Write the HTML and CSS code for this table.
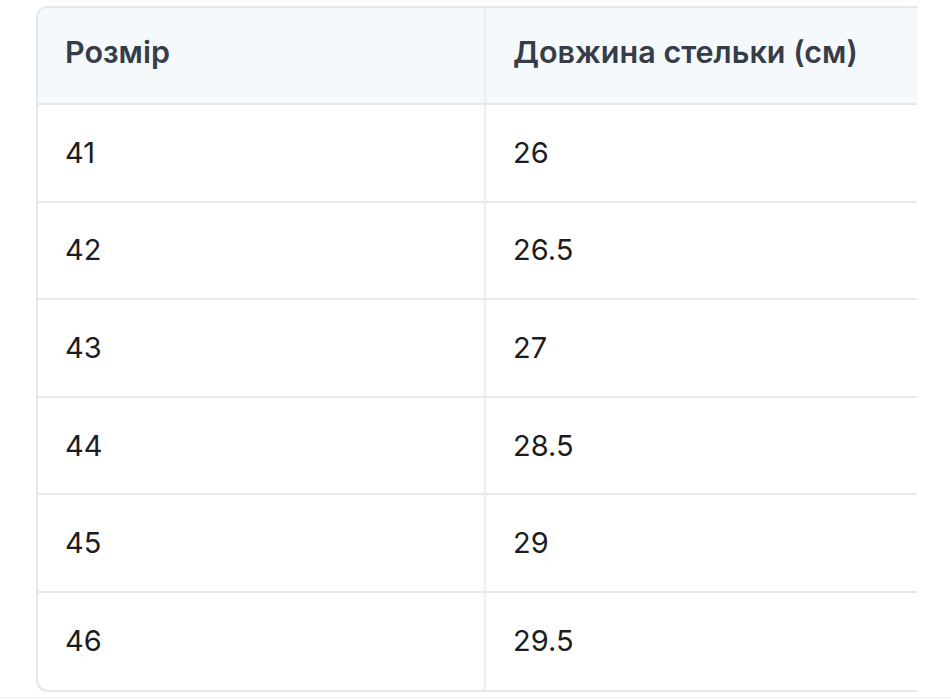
FILE: index.html
```html
<!DOCTYPE html>
<html lang="uk">
<head>
<meta charset="utf-8">
<title>Розмірна сітка</title>
<link rel="stylesheet" href="styles.css">
</head>
<body>
<div class="page">
  <div class="table-wrap">
    <table class="size-table">
      <thead>
        <tr><th class="col-size">Розмір</th><th>Довжина стельки (см)</th></tr>
      </thead>
      <tbody>
        <tr><td>41</td><td>26</td></tr>
        <tr><td>42</td><td>26.5</td></tr>
        <tr><td>43</td><td>27</td></tr>
        <tr><td>44</td><td>28.5</td></tr>
        <tr><td>45</td><td>29</td></tr>
        <tr><td>46</td><td>29.5</td></tr>
      </tbody>
    </table>
  </div>
</div>
</body>
</html>
```

FILE: styles.css
```css
html, body {
  margin: 0;
  padding: 0;
  background: #ffffff;
}
body {
  font-family: Inter, "Noto Sans", "Liberation Sans", sans-serif;
  width: 951px;
  height: 699px;
  overflow: hidden;
}
.page {
  height: 698px;
  padding: 6px 0 0 36px;
  box-sizing: border-box;
  border-bottom: 1px solid #eceef2;
}
.table-wrap {
  width: 879px;
  overflow: hidden;
  border: 2px solid #e4e7ec;
  border-right: none;
  border-radius: 12px 0 0 12px;
}
.size-table {
  width: 100%;
  border-collapse: collapse;
  table-layout: fixed;
}
.size-table th,
.size-table td {
  padding: 0 0 0 27px;
  text-align: left;
  vertical-align: middle;
  line-height: 36px;
  box-sizing: border-box;
}
.size-table th {
  height: 96px;
  padding-bottom: 7px;
  font-size: 30.5px;
  background: #f6f9fb;
  color: #373d48;
  font-weight: 600;
  border-bottom: 2px solid #e4e7ec;
}
.size-table td {
  height: 97.6px;
  font-size: 29px;
  color: #1b1d22;
  font-weight: 400;
  border-top: 2px solid #e6e8ec;
}
.size-table tbody tr:first-child td {
  border-top: none;
}
.size-table .col-size {
  width: 447px;
}
.size-table th:first-child,
.size-table td:first-child {
  border-right: 2px solid #eceef1;
}
```
